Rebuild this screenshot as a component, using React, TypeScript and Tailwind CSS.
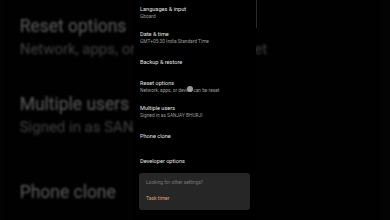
import React from "react";

type Item = { title: string; sub?: string; mt: string };

const items: Item[] = [
  { title: "Languages & input", sub: "Gboard", mt: "mt-[5px]" },
  { title: "Date & time", sub: "GMT+05:30 India Standard Time", mt: "mt-[9px]" },
  { title: "Backup & restore", mt: "mt-[12px]" },
  { title: "Reset options", sub: "Network, apps, or device can be reset", mt: "mt-[13px]" },
  { title: "Multiple users", sub: "Signed in as SANJAY BHURJI", mt: "mt-[9px]" },
  { title: "Phone clone", mt: "mt-[12px]" },
  { title: "Developer options", mt: "mt-[17px]" },
];

function Screen({ withDot }: { withDot?: boolean }) {
  return (
    <div
      className="relative flex w-[122px] h-[220px] flex-col bg-black"
      style={{ fontFamily: "Roboto, 'Noto Sans', sans-serif" }}
    >
      {items.map((it) => (
        <div key={it.title} className={`${it.mt} flex flex-col pl-[6px]`}>
          <div className="h-[8px] text-[5.6px] leading-[8px] text-[#e4e4e4] whitespace-nowrap">
            {it.title}
          </div>
          {it.sub && (
            <div className="h-[8px] text-[4.8px] leading-[8px] text-[#9c9c9c] whitespace-nowrap">
              {it.sub}
            </div>
          )}
        </div>
      ))}
      <div className="mt-[8px] ml-[5px] mr-[6px] flex h-[37px] flex-col rounded-[3px] bg-[#262626] pl-[7px]">
        <div className="mt-[6px] h-[8px] text-[4.8px] leading-[8px] text-[#7a7a7a] whitespace-nowrap">
          Looking for other settings?
        </div>
        <div className="mt-[7px] h-[8px] text-[5px] leading-[8px] text-[#e0a070] whitespace-nowrap">
          Task timer
        </div>
      </div>
      {withDot && (
        <div className="absolute left-[53px] top-[86px] h-[6px] w-[6px] rounded-full bg-[#a8a8a8] opacity-90" />
      )}
    </div>
  );
}

export default function App() {
  return (
    <div className="relative h-[220px] w-[390px] overflow-hidden bg-[#030303]">
      <div className="absolute inset-0 opacity-[0.38] blur-[0.8px]">
        <div className="absolute left-[1.3px] top-[-233px] origin-top-left scale-[3.12]">
          <Screen />
        </div>
      </div>
      <div className="relative flex pl-[134px]">
        <Screen withDot />
        <div className="h-[28px] w-px bg-[#2a2a2a]" />
      </div>
    </div>
  );
}
